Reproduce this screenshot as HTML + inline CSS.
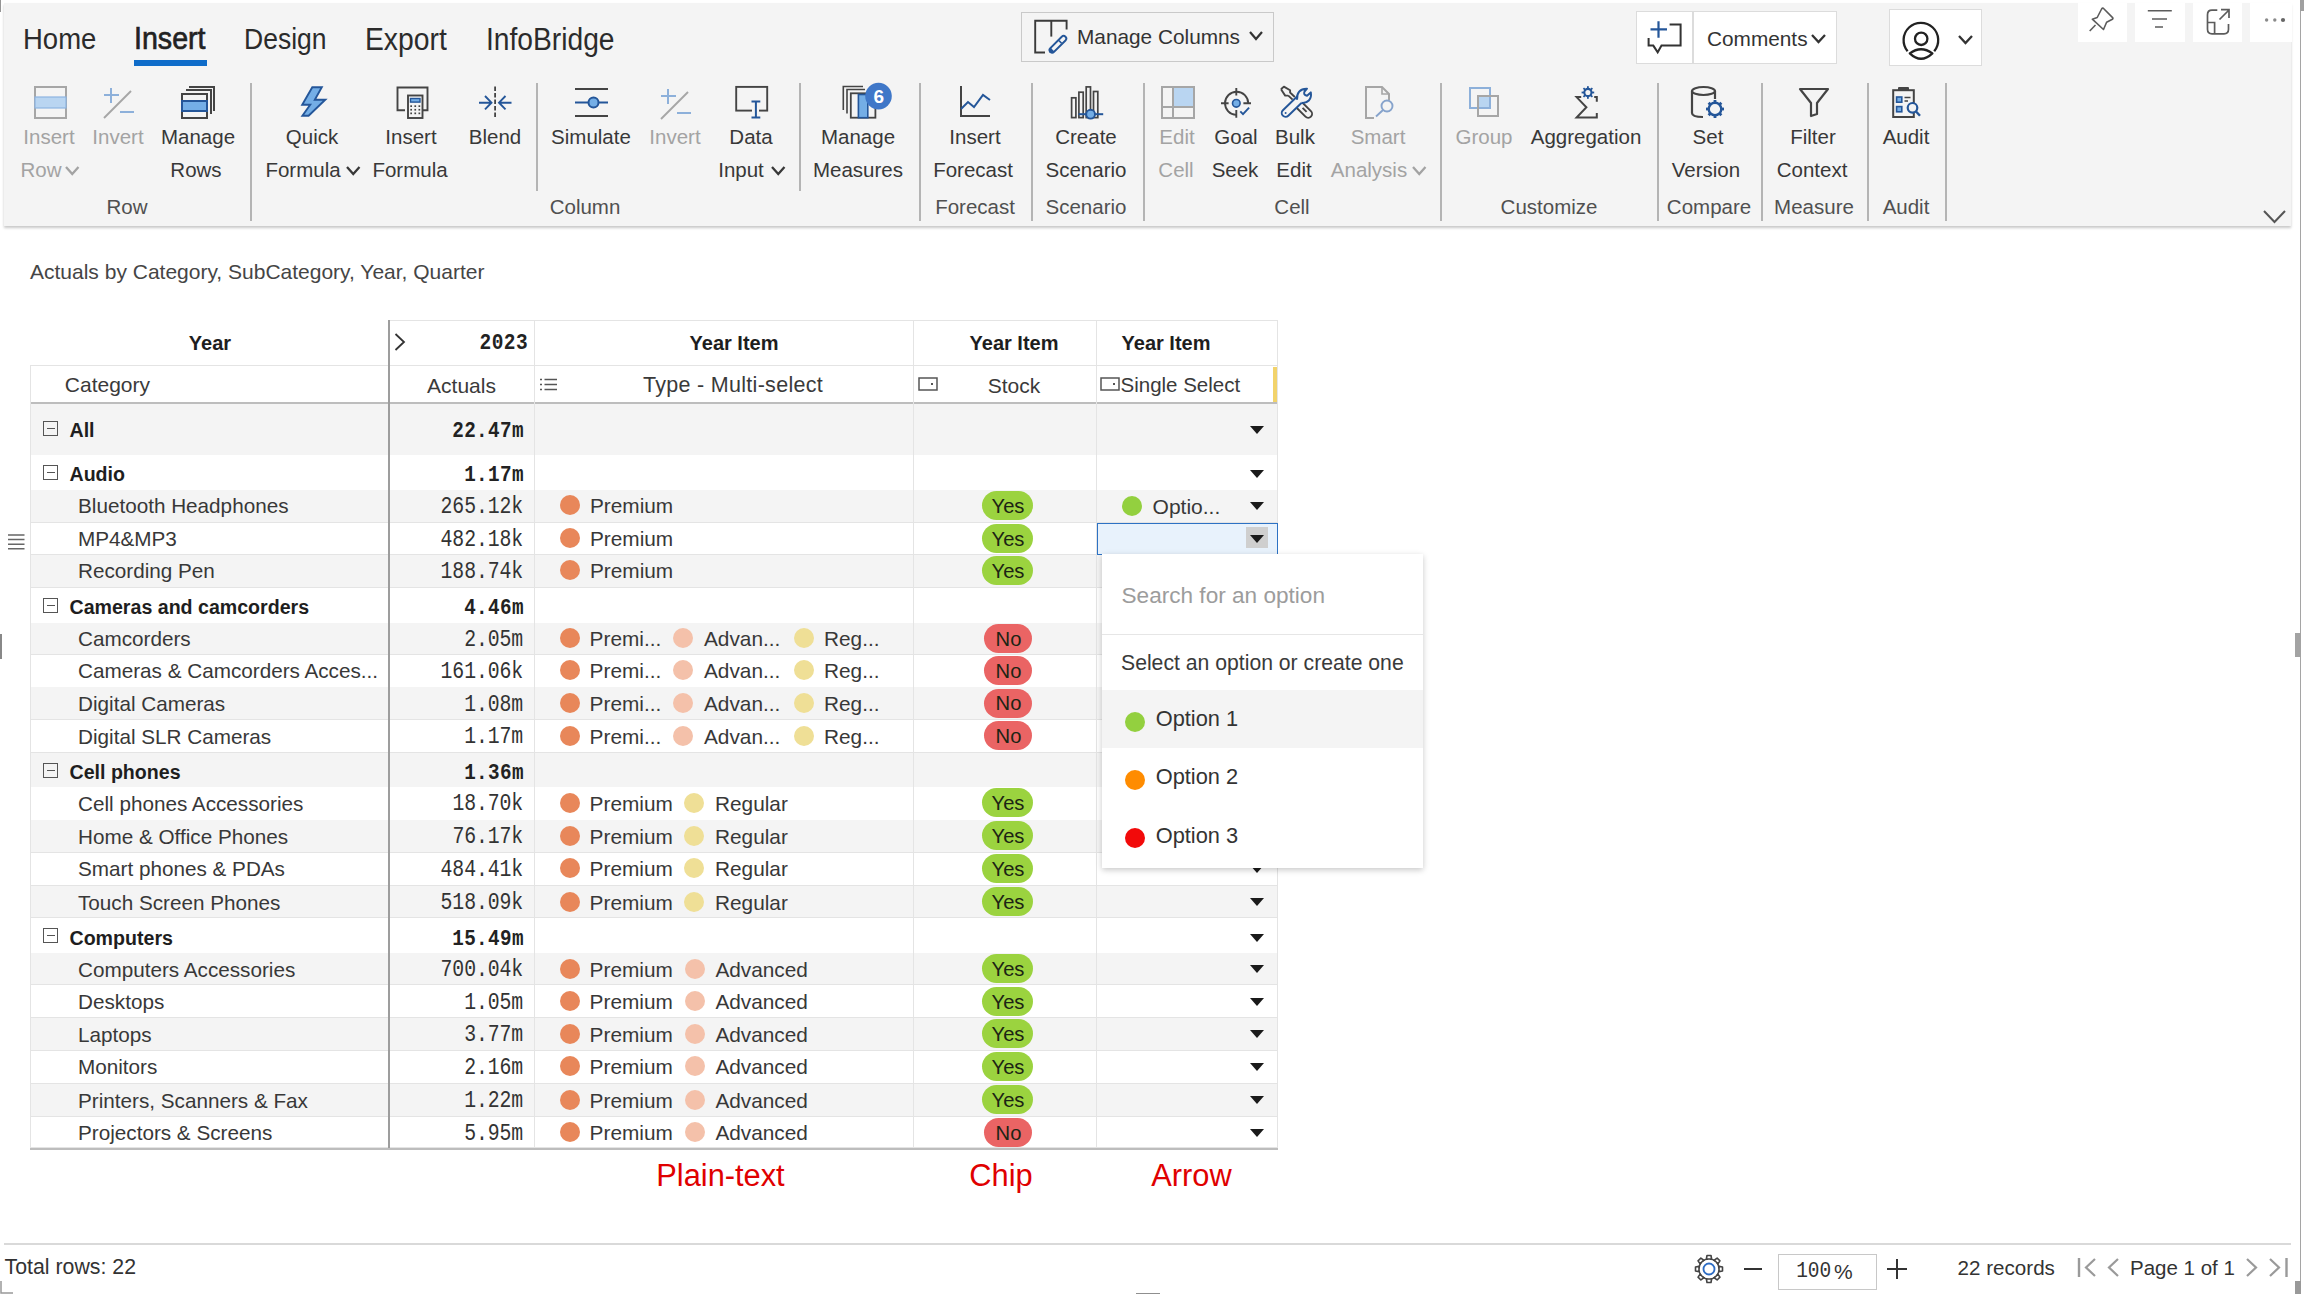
<!DOCTYPE html>
<html><head><meta charset="utf-8"><style>
html,body{margin:0;padding:0;}
body{width:2304px;height:1294px;position:relative;overflow:hidden;background:#fff;font-family:'Liberation Sans', sans-serif;}
.t{position:absolute;white-space:nowrap;}
svg{overflow:visible}
</style></head><body>
<div style="position:absolute;left:4px;top:3px;width:2287px;height:223px;background:#f4f4f4;box-shadow:0 1.5px 2.5px rgba(0,0,0,0.22);"></div>
<div style="position:absolute;left:0px;top:0px;width:1.3px;height:11.5px;background:#959595;"></div>
<div style="position:absolute;left:2299.5px;top:0px;width:1.5px;height:1294px;background:#a5a5a5;"></div>
<div style="position:absolute;left:2300px;top:0px;width:4px;height:11px;background:#a0a0a0;"></div>
<div style="position:absolute;left:2295px;top:633px;width:6px;height:24px;background:#a3a3a3;"></div>
<div class="t" style="left:23px;top:26.2px;font-size:27.5px;line-height:27.5px;color:#2b2b2b;font-weight:400;font-family:'Liberation Sans', sans-serif;transform:scaleY(1.1);transform-origin:0 23.29px;">Home</div>
<div class="t" style="left:134px;top:25.3px;font-size:28.6px;line-height:28.6px;color:#222;font-weight:400;font-family:'Liberation Sans', sans-serif;transform:scaleY(1.1);transform-origin:0 24.22px;-webkit-text-stroke:0.6px #222;">Insert</div>
<div class="t" style="left:244px;top:27.1px;font-size:26.5px;line-height:26.5px;color:#2b2b2b;font-weight:400;font-family:'Liberation Sans', sans-serif;transform:scaleY(1.1);transform-origin:0 22.45px;">Design</div>
<div class="t" style="left:365px;top:25.5px;font-size:28.3px;line-height:28.3px;color:#2b2b2b;font-weight:400;font-family:'Liberation Sans', sans-serif;transform:scaleY(1.1);transform-origin:0 23.97px;">Export</div>
<div class="t" style="left:486px;top:25.6px;font-size:28.2px;line-height:28.2px;color:#2b2b2b;font-weight:400;font-family:'Liberation Sans', sans-serif;transform:scaleY(1.1);transform-origin:0 23.89px;">InfoBridge</div>
<div style="position:absolute;left:134px;top:60px;width:73px;height:6px;background:#0f6cc9;"></div>
<div class="t" style="left:-351px;width:800px;text-align:center;top:126.9px;font-size:20.5px;line-height:20.5px;color:#a3a3a3;font-weight:400;font-family:'Liberation Sans', sans-serif;">Insert</div>
<div class="t" style="left:-282px;width:800px;text-align:center;top:126.9px;font-size:20.5px;line-height:20.5px;color:#a3a3a3;font-weight:400;font-family:'Liberation Sans', sans-serif;">Invert</div>
<div class="t" style="left:-202px;width:800px;text-align:center;top:126.9px;font-size:20.5px;line-height:20.5px;color:#383838;font-weight:400;font-family:'Liberation Sans', sans-serif;">Manage</div>
<div class="t" style="left:-88px;width:800px;text-align:center;top:126.9px;font-size:20.5px;line-height:20.5px;color:#383838;font-weight:400;font-family:'Liberation Sans', sans-serif;">Quick</div>
<div class="t" style="left:11px;width:800px;text-align:center;top:126.9px;font-size:20.5px;line-height:20.5px;color:#383838;font-weight:400;font-family:'Liberation Sans', sans-serif;">Insert</div>
<div class="t" style="left:95px;width:800px;text-align:center;top:126.9px;font-size:20.5px;line-height:20.5px;color:#383838;font-weight:400;font-family:'Liberation Sans', sans-serif;">Blend</div>
<div class="t" style="left:191px;width:800px;text-align:center;top:126.9px;font-size:20.5px;line-height:20.5px;color:#383838;font-weight:400;font-family:'Liberation Sans', sans-serif;">Simulate</div>
<div class="t" style="left:275px;width:800px;text-align:center;top:126.9px;font-size:20.5px;line-height:20.5px;color:#a3a3a3;font-weight:400;font-family:'Liberation Sans', sans-serif;">Invert</div>
<div class="t" style="left:351px;width:800px;text-align:center;top:126.9px;font-size:20.5px;line-height:20.5px;color:#383838;font-weight:400;font-family:'Liberation Sans', sans-serif;">Data</div>
<div class="t" style="left:458px;width:800px;text-align:center;top:126.9px;font-size:20.5px;line-height:20.5px;color:#383838;font-weight:400;font-family:'Liberation Sans', sans-serif;">Manage</div>
<div class="t" style="left:575px;width:800px;text-align:center;top:126.9px;font-size:20.5px;line-height:20.5px;color:#383838;font-weight:400;font-family:'Liberation Sans', sans-serif;">Insert</div>
<div class="t" style="left:686px;width:800px;text-align:center;top:126.9px;font-size:20.5px;line-height:20.5px;color:#383838;font-weight:400;font-family:'Liberation Sans', sans-serif;">Create</div>
<div class="t" style="left:777px;width:800px;text-align:center;top:126.9px;font-size:20.5px;line-height:20.5px;color:#a3a3a3;font-weight:400;font-family:'Liberation Sans', sans-serif;">Edit</div>
<div class="t" style="left:836px;width:800px;text-align:center;top:126.9px;font-size:20.5px;line-height:20.5px;color:#383838;font-weight:400;font-family:'Liberation Sans', sans-serif;">Goal</div>
<div class="t" style="left:895px;width:800px;text-align:center;top:126.9px;font-size:20.5px;line-height:20.5px;color:#383838;font-weight:400;font-family:'Liberation Sans', sans-serif;">Bulk</div>
<div class="t" style="left:978px;width:800px;text-align:center;top:126.9px;font-size:20.5px;line-height:20.5px;color:#a3a3a3;font-weight:400;font-family:'Liberation Sans', sans-serif;">Smart</div>
<div class="t" style="left:1084px;width:800px;text-align:center;top:126.9px;font-size:20.5px;line-height:20.5px;color:#a3a3a3;font-weight:400;font-family:'Liberation Sans', sans-serif;">Group</div>
<div class="t" style="left:1186px;width:800px;text-align:center;top:126.9px;font-size:20.5px;line-height:20.5px;color:#383838;font-weight:400;font-family:'Liberation Sans', sans-serif;">Aggregation</div>
<div class="t" style="left:1308px;width:800px;text-align:center;top:126.9px;font-size:20.5px;line-height:20.5px;color:#383838;font-weight:400;font-family:'Liberation Sans', sans-serif;">Set</div>
<div class="t" style="left:1413px;width:800px;text-align:center;top:126.9px;font-size:20.5px;line-height:20.5px;color:#383838;font-weight:400;font-family:'Liberation Sans', sans-serif;">Filter</div>
<div class="t" style="left:1506px;width:800px;text-align:center;top:126.9px;font-size:20.5px;line-height:20.5px;color:#383838;font-weight:400;font-family:'Liberation Sans', sans-serif;">Audit</div>
<div class="t" style="left:-359px;width:800px;text-align:center;top:159.8px;font-size:20.5px;line-height:20.5px;color:#a3a3a3;font-weight:400;font-family:'Liberation Sans', sans-serif;">Row</div>
<div class="t" style="left:-204px;width:800px;text-align:center;top:159.8px;font-size:20.5px;line-height:20.5px;color:#383838;font-weight:400;font-family:'Liberation Sans', sans-serif;">Rows</div>
<div class="t" style="left:-97px;width:800px;text-align:center;top:159.8px;font-size:20.5px;line-height:20.5px;color:#383838;font-weight:400;font-family:'Liberation Sans', sans-serif;">Formula</div>
<div class="t" style="left:10px;width:800px;text-align:center;top:159.8px;font-size:20.5px;line-height:20.5px;color:#383838;font-weight:400;font-family:'Liberation Sans', sans-serif;">Formula</div>
<div class="t" style="left:341px;width:800px;text-align:center;top:159.8px;font-size:20.5px;line-height:20.5px;color:#383838;font-weight:400;font-family:'Liberation Sans', sans-serif;">Input</div>
<div class="t" style="left:458px;width:800px;text-align:center;top:159.8px;font-size:20.5px;line-height:20.5px;color:#383838;font-weight:400;font-family:'Liberation Sans', sans-serif;">Measures</div>
<div class="t" style="left:573px;width:800px;text-align:center;top:159.8px;font-size:20.5px;line-height:20.5px;color:#383838;font-weight:400;font-family:'Liberation Sans', sans-serif;">Forecast</div>
<div class="t" style="left:686px;width:800px;text-align:center;top:159.8px;font-size:20.5px;line-height:20.5px;color:#383838;font-weight:400;font-family:'Liberation Sans', sans-serif;">Scenario</div>
<div class="t" style="left:776px;width:800px;text-align:center;top:159.8px;font-size:20.5px;line-height:20.5px;color:#a3a3a3;font-weight:400;font-family:'Liberation Sans', sans-serif;">Cell</div>
<div class="t" style="left:835px;width:800px;text-align:center;top:159.8px;font-size:20.5px;line-height:20.5px;color:#383838;font-weight:400;font-family:'Liberation Sans', sans-serif;">Seek</div>
<div class="t" style="left:894px;width:800px;text-align:center;top:159.8px;font-size:20.5px;line-height:20.5px;color:#383838;font-weight:400;font-family:'Liberation Sans', sans-serif;">Edit</div>
<div class="t" style="left:969px;width:800px;text-align:center;top:159.8px;font-size:20.5px;line-height:20.5px;color:#a3a3a3;font-weight:400;font-family:'Liberation Sans', sans-serif;">Analysis</div>
<div class="t" style="left:1306px;width:800px;text-align:center;top:159.8px;font-size:20.5px;line-height:20.5px;color:#383838;font-weight:400;font-family:'Liberation Sans', sans-serif;">Version</div>
<div class="t" style="left:1412px;width:800px;text-align:center;top:159.8px;font-size:20.5px;line-height:20.5px;color:#383838;font-weight:400;font-family:'Liberation Sans', sans-serif;">Context</div>
<svg style="position:absolute;left:65.25px;top:165.7px" width="14.5" height="9" viewBox="0 0 14.5 9"><polyline points="1,1 7.25,8 13.5,1" fill="none" stroke="#a3a3a3" stroke-width="2.3"/></svg>
<svg style="position:absolute;left:345.75px;top:165.7px" width="14.5" height="9" viewBox="0 0 14.5 9"><polyline points="1,1 7.25,8 13.5,1" fill="none" stroke="#383838" stroke-width="2.3"/></svg>
<svg style="position:absolute;left:770.75px;top:165.7px" width="14.5" height="9" viewBox="0 0 14.5 9"><polyline points="1,1 7.25,8 13.5,1" fill="none" stroke="#383838" stroke-width="2.3"/></svg>
<svg style="position:absolute;left:1411.75px;top:165.7px" width="14.5" height="9" viewBox="0 0 14.5 9"><polyline points="1,1 7.25,8 13.5,1" fill="none" stroke="#a3a3a3" stroke-width="2.3"/></svg>
<div class="t" style="left:-273px;width:800px;text-align:center;top:196.9px;font-size:20.5px;line-height:20.5px;color:#505050;font-weight:400;font-family:'Liberation Sans', sans-serif;">Row</div>
<div class="t" style="left:185px;width:800px;text-align:center;top:196.9px;font-size:20.5px;line-height:20.5px;color:#505050;font-weight:400;font-family:'Liberation Sans', sans-serif;">Column</div>
<div class="t" style="left:575px;width:800px;text-align:center;top:196.9px;font-size:20.5px;line-height:20.5px;color:#505050;font-weight:400;font-family:'Liberation Sans', sans-serif;">Forecast</div>
<div class="t" style="left:686px;width:800px;text-align:center;top:196.9px;font-size:20.5px;line-height:20.5px;color:#505050;font-weight:400;font-family:'Liberation Sans', sans-serif;">Scenario</div>
<div class="t" style="left:892px;width:800px;text-align:center;top:196.9px;font-size:20.5px;line-height:20.5px;color:#505050;font-weight:400;font-family:'Liberation Sans', sans-serif;">Cell</div>
<div class="t" style="left:1149px;width:800px;text-align:center;top:196.9px;font-size:20.5px;line-height:20.5px;color:#505050;font-weight:400;font-family:'Liberation Sans', sans-serif;">Customize</div>
<div class="t" style="left:1309px;width:800px;text-align:center;top:196.9px;font-size:20.5px;line-height:20.5px;color:#505050;font-weight:400;font-family:'Liberation Sans', sans-serif;">Compare</div>
<div class="t" style="left:1414px;width:800px;text-align:center;top:196.9px;font-size:20.5px;line-height:20.5px;color:#505050;font-weight:400;font-family:'Liberation Sans', sans-serif;">Measure</div>
<div class="t" style="left:1506px;width:800px;text-align:center;top:196.9px;font-size:20.5px;line-height:20.5px;color:#505050;font-weight:400;font-family:'Liberation Sans', sans-serif;">Audit</div>
<div style="position:absolute;left:250px;top:83px;width:2px;height:138px;background:#b4b4b4;"></div>
<div style="position:absolute;left:536px;top:83px;width:2px;height:108px;background:#b4b4b4;"></div>
<div style="position:absolute;left:799px;top:83px;width:2px;height:108px;background:#b4b4b4;"></div>
<div style="position:absolute;left:919px;top:83px;width:2px;height:138px;background:#b4b4b4;"></div>
<div style="position:absolute;left:1031px;top:83px;width:2px;height:138px;background:#b4b4b4;"></div>
<div style="position:absolute;left:1143px;top:83px;width:2px;height:138px;background:#b4b4b4;"></div>
<div style="position:absolute;left:1440px;top:83px;width:2px;height:138px;background:#b4b4b4;"></div>
<div style="position:absolute;left:1657px;top:83px;width:2px;height:138px;background:#b4b4b4;"></div>
<div style="position:absolute;left:1761px;top:83px;width:2px;height:138px;background:#b4b4b4;"></div>
<div style="position:absolute;left:1867px;top:83px;width:2px;height:138px;background:#b4b4b4;"></div>
<div style="position:absolute;left:1945px;top:83px;width:2px;height:138px;background:#b4b4b4;"></div>
<svg style="position:absolute;left:2263px;top:210px" width="23" height="13" viewBox="0 0 23 13"><polyline points="1,1 11.5,12 22,1" fill="none" stroke="#555" stroke-width="2"/></svg>
<div style="position:absolute;left:1021px;top:12px;width:253px;height:50px;border:1.5px solid #c9c9c9;box-sizing:border-box;background:#f4f4f4;"></div>
<div class="t" style="left:1077px;top:27.1px;font-size:20.8px;line-height:20.8px;color:#333;font-weight:400;font-family:'Liberation Sans', sans-serif;">Manage Columns</div>
<svg style="position:absolute;left:1248.5px;top:31.0px" width="14" height="9" viewBox="0 0 14 9"><polyline points="1,1 7.0,8 13,1" fill="none" stroke="#333" stroke-width="2.2"/></svg>
<svg style="position:absolute;left:1034px;top:19px" width="36" height="36" viewBox="0 0 36 36"><path d="M11,33.5 H1.2 V1.8 H32.6 V10.6" fill="none" stroke="#3a3a3a" stroke-width="1.9"/><path d="M17.3,1.8 V17.6" stroke="#3a3a3a" stroke-width="1.9"/><path d="M18.2,31 L29.6,19.6" stroke="#245699" stroke-width="7.2" stroke-linecap="round"/><path d="M18.8,30.4 L29.6,19.6" stroke="#f4f4f4" stroke-width="3.4" stroke-linecap="round"/><path d="M25,21.6 L27.6,24.2" stroke="#245699" stroke-width="1.6"/><path d="M15.2,33.8 L16.4,28.6 L20.6,32.8 Z" fill="#245699"/></svg>
<div style="position:absolute;left:1636px;top:11px;width:201px;height:53px;border:1.5px solid #dcdcdc;box-sizing:border-box;background:#fff;"></div>
<div style="position:absolute;left:1692px;top:11px;width:1.5px;height:53px;background:#dcdcdc;"></div>
<div class="t" style="left:1707px;top:29.3px;font-size:20.8px;line-height:20.8px;color:#333;font-weight:400;font-family:'Liberation Sans', sans-serif;">Comments</div>
<svg style="position:absolute;left:1810.5px;top:34.0px" width="15" height="9" viewBox="0 0 15 9"><polyline points="1,1 7.5,8 14,1" fill="none" stroke="#333" stroke-width="2.3"/></svg>
<svg style="position:absolute;left:1646px;top:20px" width="37" height="35" viewBox="0 0 37 35"><path d="M23.6,4.6 H34.6 V25.6 H15.5 L11.7,32.3 L7.3,25.6 H2.6 V18" fill="none" stroke="#333" stroke-width="2"/><path d="M12.5,1.3 V17.7 M4.5,9.4 H21" stroke="#245699" stroke-width="2.2"/></svg>
<div style="position:absolute;left:1889px;top:9px;width:93px;height:57px;border:1.5px solid #dcdcdc;box-sizing:border-box;background:#fff;"></div>
<svg style="position:absolute;left:1900px;top:20px" width="42" height="42" viewBox="0 0 42 42"><path d="M7.6,31.2 A17.3,17.3 0 1 1 34.2,31.2" fill="none" stroke="#222" stroke-width="2.3"/><circle cx="21.2" cy="18.8" r="6.2" fill="none" stroke="#222" stroke-width="2.3"/><path d="M9.8,33.4 Q21,25.2 32.4,33.4 Q21,44.2 9.8,33.4 Z" fill="none" stroke="#222" stroke-width="2.3" stroke-linejoin="round"/></svg>
<svg style="position:absolute;left:1957.5px;top:35.0px" width="15" height="9" viewBox="0 0 15 9"><polyline points="1,1 7.5,8 14,1" fill="none" stroke="#333" stroke-width="2.3"/></svg>
<div style="position:absolute;left:2078px;top:3px;width:49px;height:39px;background:#fff;"></div>
<div style="position:absolute;left:2135px;top:3px;width:50px;height:39px;background:#fff;"></div>
<div style="position:absolute;left:2193px;top:3px;width:49px;height:39px;background:#fff;"></div>
<div style="position:absolute;left:2250px;top:3px;width:42px;height:39px;background:#fff;"></div>
<svg style="position:absolute;left:2089px;top:7px" width="26" height="26" viewBox="0 0 26 26"><path d="M14.3,1.3 L23.6,10.6 Q24.4,11.5 23.4,12.3 L17.6,15.3 L14.5,22.5 L3.3,12.2 L8.2,10.5 L12.6,2 Q13.4,0.8 14.3,1.3 Z" fill="none" stroke="#5c5c5c" stroke-width="1.6" stroke-linejoin="round"/><path d="M6.5,18 L0.7,24" stroke="#5c5c5c" stroke-width="1.6"/></svg>
<svg style="position:absolute;left:2147px;top:9px" width="26" height="22" viewBox="0 0 26 22"><path d="M0.8,1.8 H24.8 M5,10 H20 M8,18 H16" stroke="#5c5c5c" stroke-width="1.6"/></svg>
<svg style="position:absolute;left:2204px;top:8px" width="26" height="27" viewBox="0 0 26 27"><path d="M13.3,2.2 H8 Q3.5,2.2 3.5,6.7 V21.3 Q3.5,25.8 8,25.8 H20 Q24.5,25.8 24.5,21.3 V16" fill="none" stroke="#5c5c5c" stroke-width="1.7"/><path d="M3.5,14.5 H10.6 V25.8" fill="none" stroke="#5c5c5c" stroke-width="1.7"/><path d="M15.5,11.5 L25,2 M17,1.7 H25 V10" fill="none" stroke="#5c5c5c" stroke-width="1.7"/></svg>
<svg style="position:absolute;left:2263px;top:16px" width="28" height="8" viewBox="0 0 28 8"><circle cx="3.6" cy="4" r="1.7" fill="#8a8a8a"/><circle cx="11.8" cy="4" r="1.7" fill="#8a8a8a"/><circle cx="20" cy="4" r="2.1" fill="#666"/></svg>
<svg style="position:absolute;left:34px;top:86px" width="33" height="33" viewBox="0 0 33 33"><rect x="1" y="1" width="31" height="31" fill="none" stroke="#a6a6a6" stroke-width="2"/><rect x="1" y="11" width="31" height="11" fill="#b9d5f1" stroke="#8db4e2" stroke-width="1.2"/></svg>
<svg style="position:absolute;left:103px;top:87px" width="32" height="32" viewBox="0 0 32 32"><path d="M8,1 V16 M1,8 H16" stroke="#8db0da" stroke-width="2"/><path d="M17,25 H31" stroke="#8db0da" stroke-width="2"/><path d="M1,31 L28,4" stroke="#a6a6a6" stroke-width="2"/></svg>
<svg style="position:absolute;left:181px;top:86px" width="34" height="33" viewBox="0 0 34 33"><path d="M8,1 H33 V25" fill="none" stroke="#444444" stroke-width="2"/><path d="M5,4 H30 V28" fill="none" stroke="#444444" stroke-width="2"/><rect x="1" y="8" width="25" height="24" fill="#f4f4f4" stroke="#444444" stroke-width="2"/><rect x="1" y="15" width="25" height="10" fill="#74aee6" stroke="#245699" stroke-width="2"/></svg>
<svg style="position:absolute;left:300px;top:86px" width="28" height="31" viewBox="0 0 28 31"><path d="M12.3,1.2 H21.8 L14.8,13.8 H25.3 L8.6,29.8 H2.4 L10.2,18.8 H2.2 Z" fill="#74aee6" stroke="#245699" stroke-width="1.9" stroke-linejoin="miter"/></svg>
<svg style="position:absolute;left:395px;top:86px" width="35" height="34" viewBox="0 0 35 34"><path d="M10,24.2 H2.5 V1.5 H32.5 V24.2 H28" fill="none" stroke="#444444" stroke-width="1.9"/><rect x="13" y="9.5" width="14.5" height="22.5" fill="#f4f4f4" stroke="#444444" stroke-width="1.9"/><rect x="15.5" y="12.5" width="9.5" height="3.6" fill="#74aee6" stroke="#245699" stroke-width="1.4"/><rect x="15.3" y="19.3" width="1.7" height="1.7" fill="#444444"/><rect x="15.3" y="22.9" width="1.7" height="1.7" fill="#444444"/><rect x="15.3" y="26.5" width="1.7" height="1.7" fill="#444444"/><rect x="19.4" y="19.3" width="1.7" height="1.7" fill="#444444"/><rect x="19.4" y="22.9" width="1.7" height="1.7" fill="#444444"/><rect x="19.4" y="26.5" width="1.7" height="1.7" fill="#444444"/><rect x="23.5" y="19.3" width="1.7" height="1.7" fill="#444444"/><rect x="23.5" y="22.9" width="1.7" height="1.7" fill="#444444"/><rect x="23.5" y="26.5" width="1.7" height="1.7" fill="#444444"/></svg>
<svg style="position:absolute;left:477px;top:86px" width="36" height="34" viewBox="0 0 36 34"><path d="M18.1,0.5 V33" stroke="#444444" stroke-width="1.8" stroke-dasharray="4.5,2"/><path d="M2,16.7 H14 M8,10 L14.5,16.7 L8,23.4" fill="none" stroke="#245699" stroke-width="1.9"/><path d="M34.5,16.7 H22.3 M28.5,10 L22,16.7 L28.5,23.4" fill="none" stroke="#245699" stroke-width="1.9"/></svg>
<svg style="position:absolute;left:574px;top:87px" width="36" height="31" viewBox="0 0 36 31"><path d="M1,2 H34 M1,29 H34" stroke="#444444" stroke-width="2"/><path d="M1,15.5 H34" stroke="#245699" stroke-width="2"/><circle cx="19.5" cy="15.5" r="5" fill="#74aee6" stroke="#245699" stroke-width="2"/></svg>
<svg style="position:absolute;left:660px;top:88px" width="32" height="32" viewBox="0 0 32 32"><path d="M8,1 V16 M1,8 H16" stroke="#8db0da" stroke-width="2"/><path d="M17,25 H31" stroke="#8db0da" stroke-width="2"/><path d="M1,31 L28,4" stroke="#a6a6a6" stroke-width="2"/></svg>
<svg style="position:absolute;left:735px;top:86px" width="34" height="34" viewBox="0 0 34 34"><rect x="1.2" y="0.9" width="31" height="23.7" fill="none" stroke="#444444" stroke-width="1.9"/><rect x="17" y="21" width="7" height="6" fill="#f4f4f4"/><path d="M16.5,15.5 H25.3 M20.9,15.5 V31.5 M16.5,31.5 H25.3" stroke="#245699" stroke-width="2"/></svg>
<svg style="position:absolute;left:842px;top:85px" width="50" height="35" viewBox="0 0 50 35"><path d="M1.3,25 V1.5 H21" fill="none" stroke="#444444" stroke-width="1.6"/><path d="M5,28.5 V4.5 H23" fill="none" stroke="#444444" stroke-width="1.6"/><rect x="8.8" y="8.3" width="24.6" height="24.4" fill="#f4f4f4" stroke="#444444" stroke-width="1.8"/><rect x="16.4" y="9.5" width="9.4" height="23.2" fill="#74aee6" stroke="#245699" stroke-width="1.6"/><circle cx="36.5" cy="11.1" r="13.3" fill="#3f77c8"/><text x="36.7" y="18.2" font-family="Liberation Sans" font-weight="700" font-size="19" fill="#fff" text-anchor="middle">6</text></svg>
<svg style="position:absolute;left:959px;top:86px" width="33" height="32" viewBox="0 0 33 32"><path d="M2,0 V30 H31" fill="none" stroke="#444444" stroke-width="2"/><polyline points="2,23 9,16 15,21 24,9 31,14" fill="none" stroke="#245699" stroke-width="2"/></svg>
<svg style="position:absolute;left:1070px;top:86px" width="35" height="33" viewBox="0 0 35 33"><rect x="1.6" y="11.8" width="4.3" height="19.8" fill="none" stroke="#444444" stroke-width="1.7"/><rect x="8.9" y="6.2" width="4.3" height="25.4" fill="none" stroke="#444444" stroke-width="1.7"/><rect x="16.2" y="0.9" width="4.3" height="30.7" fill="none" stroke="#444444" stroke-width="1.7"/><rect x="23.5" y="5.5" width="4.3" height="26.1" fill="none" stroke="#444444" stroke-width="1.7"/><path d="M8.5,28.2 H33.2" stroke="#245699" stroke-width="2"/><circle cx="20.6" cy="28.2" r="4.4" fill="#74aee6" stroke="#245699" stroke-width="1.9"/></svg>
<svg style="position:absolute;left:1161px;top:86px" width="34" height="33" viewBox="0 0 34 33"><rect x="12" y="1" width="21" height="20" fill="#b9d5f1"/><rect x="1" y="1" width="32" height="31" fill="none" stroke="#a6a6a6" stroke-width="2"/><path d="M12,1 V32 M1,21 H33" stroke="#a6a6a6" stroke-width="2"/></svg>
<svg style="position:absolute;left:1220px;top:86px" width="33" height="33" viewBox="0 0 33 33"><path d="M28.2,17.3 A11.6,11.6 0 1 0 16.3,28.9" fill="none" stroke="#444444" stroke-width="1.9"/><path d="M16.3,1.9 V9.6 M16.3,24.1 V31.8 M1,17.3 H8.6 M23.4,17.3 H31" stroke="#444444" stroke-width="1.9"/><circle cx="16.3" cy="17.3" r="3.8" fill="#74aee6" stroke="#245699" stroke-width="1.6"/><path d="M20.3,25.4 L23,28.1 L29.1,21.6" fill="none" stroke="#245699" stroke-width="1.9"/></svg>
<svg style="position:absolute;left:1278px;top:86px" width="36" height="34" viewBox="0 0 36 34"><path d="M3,3.3 L5.9,0.6 L12.1,4.3 L12.1,6.5 L16.8,11 M10.3,9.6 L7.2,9.6 L3,3.3 M10.3,9.6 L14.6,13.6" fill="none" stroke="#444444" stroke-width="1.9" stroke-linejoin="round"/><path d="M19.8,17.5 L30.2,27.9" stroke="#444444" stroke-width="9.6" stroke-linecap="round"/><path d="M19.8,17.5 L30.2,27.9" stroke="#f4f4f4" stroke-width="5.8" stroke-linecap="round"/><path d="M24.6,21.8 L28.6,25.9" stroke="#444444" stroke-width="1.9"/><path d="M7.6,27 L21.5,13.5" stroke="#245699" stroke-width="9.6" stroke-linecap="round"/><path d="M7.6,27 L21.5,13.5" stroke="#f4f4f4" stroke-width="5.8" stroke-linecap="round"/><path d="M19,13.8 C18.5,7 22,2.5 29,2.7 L26.5,5.6 Q25,9 29,9.8 L32.8,6.4 C34,13.5 29.5,17.5 23.5,16.8" fill="#f4f4f4" stroke="#245699" stroke-width="2" stroke-linejoin="round"/><circle cx="7.6" cy="27" r="1" fill="#245699"/></svg>
<svg style="position:absolute;left:1364px;top:86px" width="30" height="34" viewBox="0 0 30 34"><path d="M10,32 H2 V1 H18 L25,8 V14" fill="none" stroke="#a6a6a6" stroke-width="2"/><path d="M18,1 V8 H25" fill="none" stroke="#a6a6a6" stroke-width="1.6"/><circle cx="23" cy="20" r="5.5" fill="none" stroke="#86a3cc" stroke-width="1.9"/><path d="M19,24 L12,30.5" stroke="#86a3cc" stroke-width="1.9"/></svg>
<svg style="position:absolute;left:1469px;top:87px" width="31" height="31" viewBox="0 0 31 31"><rect x="9" y="9" width="12" height="12" fill="#b9d5f1"/><rect x="1" y="1" width="20" height="20" fill="none" stroke="#8db0da" stroke-width="2"/><rect x="9" y="9" width="20" height="20" fill="none" stroke="#a6a6a6" stroke-width="2"/></svg>
<svg style="position:absolute;left:1574px;top:86px" width="26" height="33" viewBox="0 0 26 33"><path d="M7.2,11.1 H2.6 L12.4,21.3 L2.6,31.6 H22.8 V27" fill="none" stroke="#444444" stroke-width="2"/><path d="M20.2,11.1 H22.8 V15.8" fill="none" stroke="#444444" stroke-width="2"/><circle cx="13.9" cy="6.5" r="3.6" fill="none" stroke="#245699" stroke-width="2.1"/><rect x="13" y="0.2" width="1.8" height="2.6" fill="#245699" transform="rotate(0 13.9 6.5)"/><rect x="13" y="0.2" width="1.8" height="2.6" fill="#245699" transform="rotate(45 13.9 6.5)"/><rect x="13" y="0.2" width="1.8" height="2.6" fill="#245699" transform="rotate(90 13.9 6.5)"/><rect x="13" y="0.2" width="1.8" height="2.6" fill="#245699" transform="rotate(135 13.9 6.5)"/><rect x="13" y="0.2" width="1.8" height="2.6" fill="#245699" transform="rotate(180 13.9 6.5)"/><rect x="13" y="0.2" width="1.8" height="2.6" fill="#245699" transform="rotate(225 13.9 6.5)"/><rect x="13" y="0.2" width="1.8" height="2.6" fill="#245699" transform="rotate(270 13.9 6.5)"/><rect x="13" y="0.2" width="1.8" height="2.6" fill="#245699" transform="rotate(315 13.9 6.5)"/></svg>
<svg style="position:absolute;left:1690px;top:86px" width="36" height="34" viewBox="0 0 36 34"><path d="M2,5 V27 Q2,31 13,31" fill="none" stroke="#444444" stroke-width="2.2"/><ellipse cx="13.5" cy="5" rx="11.5" ry="4" fill="none" stroke="#444444" stroke-width="2.2"/><path d="M25,5 V13" stroke="#444444" stroke-width="2.2"/><circle cx="25" cy="23" r="6.3" fill="#f4f4f4" stroke="#245699" stroke-width="2.4"/><rect x="23.6" y="14" width="2.8" height="3.2" fill="#245699" transform="rotate(0 25 23)"/><rect x="23.6" y="14" width="2.8" height="3.2" fill="#245699" transform="rotate(45 25 23)"/><rect x="23.6" y="14" width="2.8" height="3.2" fill="#245699" transform="rotate(90 25 23)"/><rect x="23.6" y="14" width="2.8" height="3.2" fill="#245699" transform="rotate(135 25 23)"/><rect x="23.6" y="14" width="2.8" height="3.2" fill="#245699" transform="rotate(180 25 23)"/><rect x="23.6" y="14" width="2.8" height="3.2" fill="#245699" transform="rotate(225 25 23)"/><rect x="23.6" y="14" width="2.8" height="3.2" fill="#245699" transform="rotate(270 25 23)"/><rect x="23.6" y="14" width="2.8" height="3.2" fill="#245699" transform="rotate(315 25 23)"/></svg>
<svg style="position:absolute;left:1798px;top:87px" width="32" height="31" viewBox="0 0 32 31"><path d="M2,2 H30 L19,16 V27 L13,29 V16 Z" fill="none" stroke="#444444" stroke-width="2.2" stroke-linejoin="round"/></svg>
<svg style="position:absolute;left:1891px;top:87px" width="30" height="32" viewBox="0 0 30 32"><rect x="2.2" y="3.2" width="20.6" height="26.8" fill="none" stroke="#444444" stroke-width="2"/><rect x="7" y="0" width="11" height="4" rx="1" fill="#444444"/><rect x="5.6" y="10" width="5.2" height="5.2" fill="#74aee6" stroke="#245699" stroke-width="1.6"/><rect x="5.6" y="19.6" width="5.2" height="5.2" fill="#74aee6" stroke="#245699" stroke-width="1.6"/><path d="M13.5,10.5 H19.5 M13.5,14 H17" stroke="#444444" stroke-width="1.6"/><circle cx="21.5" cy="20.8" r="4.8" fill="#f4f4f4" stroke="#245699" stroke-width="2.2"/><path d="M25,24.5 L29,28.8" stroke="#245699" stroke-width="2.4"/></svg>
<div class="t" style="left:30px;top:261.0px;font-size:21px;line-height:21px;color:#454545;font-weight:400;font-family:'Liberation Sans', sans-serif;">Actuals by Category, SubCategory, Year, Quarter</div>
<div style="position:absolute;left:30px;top:404px;width:1247px;height:51px;background:#f4f4f4;"></div>
<div style="position:absolute;left:30px;top:490px;width:1247px;height:33px;background:#f4f4f4;"></div>
<div style="position:absolute;left:30px;top:522px;width:1247px;height:1px;background:#e4e4e4;"></div>
<div style="position:absolute;left:30px;top:554px;width:1247px;height:1px;background:#e4e4e4;"></div>
<div style="position:absolute;left:30px;top:555px;width:1247px;height:33px;background:#f4f4f4;"></div>
<div style="position:absolute;left:30px;top:587px;width:1247px;height:1px;background:#e4e4e4;"></div>
<div style="position:absolute;left:30px;top:623px;width:1247px;height:32px;background:#f4f4f4;"></div>
<div style="position:absolute;left:30px;top:654px;width:1247px;height:1px;background:#e4e4e4;"></div>
<div style="position:absolute;left:30px;top:687px;width:1247px;height:1px;background:#e4e4e4;"></div>
<div style="position:absolute;left:30px;top:687px;width:1247px;height:33px;background:#f4f4f4;"></div>
<div style="position:absolute;left:30px;top:719px;width:1247px;height:1px;background:#e4e4e4;"></div>
<div style="position:absolute;left:30px;top:752px;width:1247px;height:1px;background:#e4e4e4;"></div>
<div style="position:absolute;left:30px;top:753px;width:1247px;height:34px;background:#f4f4f4;"></div>
<div style="position:absolute;left:30px;top:820px;width:1247px;height:1px;background:#e4e4e4;"></div>
<div style="position:absolute;left:30px;top:820px;width:1247px;height:33px;background:#f4f4f4;"></div>
<div style="position:absolute;left:30px;top:852px;width:1247px;height:1px;background:#e4e4e4;"></div>
<div style="position:absolute;left:30px;top:885px;width:1247px;height:1px;background:#e4e4e4;"></div>
<div style="position:absolute;left:30px;top:886px;width:1247px;height:32px;background:#f4f4f4;"></div>
<div style="position:absolute;left:30px;top:917px;width:1247px;height:1px;background:#e4e4e4;"></div>
<div style="position:absolute;left:30px;top:953px;width:1247px;height:32px;background:#f4f4f4;"></div>
<div style="position:absolute;left:30px;top:984px;width:1247px;height:1px;background:#e4e4e4;"></div>
<div style="position:absolute;left:30px;top:1017px;width:1247px;height:1px;background:#e4e4e4;"></div>
<div style="position:absolute;left:30px;top:1018px;width:1247px;height:33px;background:#f4f4f4;"></div>
<div style="position:absolute;left:30px;top:1050px;width:1247px;height:1px;background:#e4e4e4;"></div>
<div style="position:absolute;left:30px;top:1083px;width:1247px;height:1px;background:#e4e4e4;"></div>
<div style="position:absolute;left:30px;top:1084px;width:1247px;height:33px;background:#f4f4f4;"></div>
<div style="position:absolute;left:30px;top:1116px;width:1247px;height:1px;background:#e4e4e4;"></div>
<div style="position:absolute;left:30px;top:1147px;width:1247px;height:1px;background:#e4e4e4;"></div>
<div style="position:absolute;left:388px;top:320px;width:889px;height:1px;background:#e4e4e4;"></div>
<div style="position:absolute;left:30px;top:365px;width:1247px;height:1px;background:#e4e4e4;"></div>
<div style="position:absolute;left:30px;top:402px;width:1248px;height:2px;background:#bdbdbd;"></div>
<div style="position:absolute;left:30px;top:1148px;width:1248px;height:2px;background:#bdbdbd;"></div>
<div style="position:absolute;left:30px;top:365px;width:1px;height:783px;background:#e4e4e4;"></div>
<div style="position:absolute;left:534px;top:320px;width:1px;height:828px;background:#e4e4e4;"></div>
<div style="position:absolute;left:913px;top:320px;width:1px;height:828px;background:#e4e4e4;"></div>
<div style="position:absolute;left:1096px;top:320px;width:1px;height:828px;background:#e4e4e4;"></div>
<div style="position:absolute;left:1277px;top:320px;width:1px;height:828px;background:#e4e4e4;"></div>
<div style="position:absolute;left:388px;top:320px;width:2px;height:828px;background:#9d9d9d;"></div>
<div style="position:absolute;left:1273px;top:367px;width:4px;height:35px;background:#f2d36b;"></div>
<div class="t" style="left:-190px;width:800px;text-align:center;top:333.1px;font-size:20px;line-height:20px;color:#1e1e1e;font-weight:700;font-family:'Liberation Sans', sans-serif;">Year</div>
<div class="t" style="left:228px;width:300px;text-align:right;top:335.2px;font-size:19.5px;line-height:19.5px;color:#222;font-weight:700;font-family:'Liberation Mono', monospace;transform:scaleY(1.12);transform-origin:0 15.0px;letter-spacing:0.4px">2023</div>
<svg style="position:absolute;left:394px;top:333px" width="12" height="18" viewBox="0 0 12 18"><polyline points="1.5,1 10,9 1.5,17" fill="none" stroke="#333" stroke-width="1.8"/></svg>
<div class="t" style="left:334px;width:800px;text-align:center;top:333.1px;font-size:20px;line-height:20px;color:#1e1e1e;font-weight:700;font-family:'Liberation Sans', sans-serif;">Year Item</div>
<div class="t" style="left:614px;width:800px;text-align:center;top:333.1px;font-size:20px;line-height:20px;color:#1e1e1e;font-weight:700;font-family:'Liberation Sans', sans-serif;">Year Item</div>
<div class="t" style="left:766px;width:800px;text-align:center;top:333.1px;font-size:20px;line-height:20px;color:#1e1e1e;font-weight:700;font-family:'Liberation Sans', sans-serif;">Year Item</div>
<div class="t" style="left:64.8px;top:373.7px;font-size:21px;line-height:21px;color:#3a3a3a;font-weight:400;font-family:'Liberation Sans', sans-serif;">Category</div>
<div class="t" style="left:61.5px;width:800px;text-align:center;top:374.9px;font-size:21px;line-height:21px;color:#3a3a3a;font-weight:400;font-family:'Liberation Sans', sans-serif;">Actuals</div>
<div class="t" style="left:333px;width:800px;text-align:center;top:374.5px;font-size:21.5px;line-height:21.5px;color:#3a3a3a;font-weight:400;font-family:'Liberation Sans', sans-serif;letter-spacing:0.3px">Type - Multi-select</div>
<div class="t" style="left:614px;width:800px;text-align:center;top:374.9px;font-size:21px;line-height:21px;color:#3a3a3a;font-weight:400;font-family:'Liberation Sans', sans-serif;">Stock</div>
<div class="t" style="left:1120.5px;top:375.3px;font-size:20.5px;line-height:20.5px;color:#3a3a3a;font-weight:400;font-family:'Liberation Sans', sans-serif;">Single Select</div>
<svg style="position:absolute;left:540px;top:378px" width="18" height="13" viewBox="0 0 18 13"><path d="M0,1.5 H2 M0,6.5 H2 M0,11.5 H2" stroke="#555" stroke-width="1.6"/><path d="M4.5,1.5 H17 M4.5,6.5 H17 M4.5,11.5 H17" stroke="#555" stroke-width="1.6"/></svg>
<svg style="position:absolute;left:918px;top:377px" width="20" height="14" viewBox="0 0 20 14"><rect x="1" y="1" width="18" height="12" fill="none" stroke="#555" stroke-width="1.5"/><rect x="13" y="6" width="2" height="2" fill="#555"/></svg>
<svg style="position:absolute;left:1100px;top:377px" width="20" height="14" viewBox="0 0 20 14"><rect x="1" y="1" width="18" height="12" fill="none" stroke="#555" stroke-width="1.5"/><rect x="13" y="6" width="2" height="2" fill="#555"/></svg>
<div style="position:absolute;left:43px;top:421px;width:15px;height:15px;border:1.4px solid #555;box-sizing:border-box;"></div>
<div style="position:absolute;left:46.5px;top:427.5px;width:8px;height:1.6px;background:#555;"></div>
<div class="t" style="left:69.5px;top:421.4px;font-size:19.6px;line-height:19.6px;color:#1e1e1e;font-weight:700;font-family:'Liberation Sans', sans-serif;">All</div>
<div class="t" style="left:224px;width:300px;text-align:right;top:423.4px;font-size:19.3px;line-height:19.3px;color:#222;font-weight:700;font-family:'Liberation Mono', monospace;transform:scaleY(1.12);transform-origin:0 14.8px;letter-spacing:0.4px">22.47m</div>
<svg style="position:absolute;left:1250px;top:426px" width="14" height="8" viewBox="0 0 14 8"><polygon points="0,0 14,0 7,8" fill="#1a1a1a"/></svg>
<div style="position:absolute;left:43px;top:465px;width:15px;height:15px;border:1.4px solid #555;box-sizing:border-box;"></div>
<div style="position:absolute;left:46.5px;top:471.5px;width:8px;height:1.6px;background:#555;"></div>
<div class="t" style="left:69.5px;top:465.4px;font-size:19.6px;line-height:19.6px;color:#1e1e1e;font-weight:700;font-family:'Liberation Sans', sans-serif;">Audio</div>
<div class="t" style="left:224px;width:300px;text-align:right;top:467.4px;font-size:19.3px;line-height:19.3px;color:#222;font-weight:700;font-family:'Liberation Mono', monospace;transform:scaleY(1.12);transform-origin:0 14.8px;letter-spacing:0.4px">1.17m</div>
<svg style="position:absolute;left:1250px;top:470px" width="14" height="8" viewBox="0 0 14 8"><polygon points="0,0 14,0 7,8" fill="#1a1a1a"/></svg>
<div class="t" style="left:78px;top:496.4px;font-size:20.7px;line-height:20.7px;color:#383838;font-weight:400;font-family:'Liberation Sans', sans-serif;">Bluetooth Headphones</div>
<div class="t" style="left:223px;width:300px;text-align:right;top:498.9px;font-size:19.8px;line-height:19.8px;color:#333;font-weight:400;font-family:'Liberation Mono', monospace;transform:scaleY(1.18);transform-origin:0 15.2px;letter-spacing:-0.1px">265.12k</div>
<div style="position:absolute;left:560px;top:495.4px;width:20px;height:20px;border-radius:50%;background:#e8875a"></div>
<div class="t" style="left:590px;top:496.3px;font-size:20.8px;line-height:20.8px;color:#383838;font-weight:400;font-family:'Liberation Sans', sans-serif;">Premium</div>
<div style="position:absolute;left:982px;top:490.9px;width:51px;height:29px;border-radius:15px;background:#9bd33f"></div>
<div class="t" style="left:608.0px;width:800px;text-align:center;top:495.8px;font-size:20.2px;line-height:20.2px;color:#1c2414;font-weight:400;font-family:'Liberation Sans', sans-serif;">Yes</div>
<svg style="position:absolute;left:1250px;top:501.9px" width="14" height="8" viewBox="0 0 14 8"><polygon points="0,0 14,0 7,8" fill="#1a1a1a"/></svg>
<div style="position:absolute;left:1121.7px;top:495.7px;width:20px;height:20px;border-radius:50%;background:#93d03f"></div>
<div class="t" style="left:1152.6px;top:496.1px;font-size:21px;line-height:21px;color:#383838;font-weight:400;font-family:'Liberation Sans', sans-serif;">Optio...</div>
<div class="t" style="left:78px;top:529.1px;font-size:20.7px;line-height:20.7px;color:#383838;font-weight:400;font-family:'Liberation Sans', sans-serif;">MP4&amp;MP3</div>
<div class="t" style="left:223px;width:300px;text-align:right;top:531.6px;font-size:19.8px;line-height:19.8px;color:#333;font-weight:400;font-family:'Liberation Mono', monospace;transform:scaleY(1.18);transform-origin:0 15.2px;letter-spacing:-0.1px">482.18k</div>
<div style="position:absolute;left:560px;top:528.1px;width:20px;height:20px;border-radius:50%;background:#e8875a"></div>
<div class="t" style="left:590px;top:529.0px;font-size:20.8px;line-height:20.8px;color:#383838;font-weight:400;font-family:'Liberation Sans', sans-serif;">Premium</div>
<div style="position:absolute;left:982px;top:523.6px;width:51px;height:29px;border-radius:15px;background:#9bd33f"></div>
<div class="t" style="left:608.0px;width:800px;text-align:center;top:528.5px;font-size:20.2px;line-height:20.2px;color:#1c2414;font-weight:400;font-family:'Liberation Sans', sans-serif;">Yes</div>
<div class="t" style="left:78px;top:561.4px;font-size:20.7px;line-height:20.7px;color:#383838;font-weight:400;font-family:'Liberation Sans', sans-serif;">Recording Pen</div>
<div class="t" style="left:223px;width:300px;text-align:right;top:563.9px;font-size:19.8px;line-height:19.8px;color:#333;font-weight:400;font-family:'Liberation Mono', monospace;transform:scaleY(1.18);transform-origin:0 15.2px;letter-spacing:-0.1px">188.74k</div>
<div style="position:absolute;left:560px;top:560.4000000000001px;width:20px;height:20px;border-radius:50%;background:#e8875a"></div>
<div class="t" style="left:590px;top:561.3px;font-size:20.8px;line-height:20.8px;color:#383838;font-weight:400;font-family:'Liberation Sans', sans-serif;">Premium</div>
<div style="position:absolute;left:982px;top:555.9px;width:51px;height:29px;border-radius:15px;background:#9bd33f"></div>
<div class="t" style="left:608.0px;width:800px;text-align:center;top:560.8px;font-size:20.2px;line-height:20.2px;color:#1c2414;font-weight:400;font-family:'Liberation Sans', sans-serif;">Yes</div>
<div style="position:absolute;left:43px;top:598px;width:15px;height:15px;border:1.4px solid #555;box-sizing:border-box;"></div>
<div style="position:absolute;left:46.5px;top:604.5px;width:8px;height:1.6px;background:#555;"></div>
<div class="t" style="left:69.5px;top:598.0px;font-size:19.6px;line-height:19.6px;color:#1e1e1e;font-weight:700;font-family:'Liberation Sans', sans-serif;">Cameras and camcorders</div>
<div class="t" style="left:224px;width:300px;text-align:right;top:600.0px;font-size:19.3px;line-height:19.3px;color:#222;font-weight:700;font-family:'Liberation Mono', monospace;transform:scaleY(1.12);transform-origin:0 14.8px;letter-spacing:0.4px">4.46m</div>
<div class="t" style="left:78px;top:629.4px;font-size:20.7px;line-height:20.7px;color:#383838;font-weight:400;font-family:'Liberation Sans', sans-serif;">Camcorders</div>
<div class="t" style="left:223px;width:300px;text-align:right;top:631.9px;font-size:19.8px;line-height:19.8px;color:#333;font-weight:400;font-family:'Liberation Mono', monospace;transform:scaleY(1.18);transform-origin:0 15.2px;letter-spacing:-0.1px">2.05m</div>
<div style="position:absolute;left:560px;top:628.4000000000001px;width:20px;height:20px;border-radius:50%;background:#e8875a"></div>
<div class="t" style="left:589.6px;top:629.3px;font-size:20.8px;line-height:20.8px;color:#383838;font-weight:400;font-family:'Liberation Sans', sans-serif;">Premi...</div>
<div style="position:absolute;left:673px;top:628.4000000000001px;width:20px;height:20px;border-radius:50%;background:#f4c1aa"></div>
<div class="t" style="left:704px;top:629.3px;font-size:20.8px;line-height:20.8px;color:#383838;font-weight:400;font-family:'Liberation Sans', sans-serif;">Advan...</div>
<div style="position:absolute;left:793.7px;top:628.4000000000001px;width:20px;height:20px;border-radius:50%;background:#efdf96"></div>
<div class="t" style="left:824px;top:629.3px;font-size:20.8px;line-height:20.8px;color:#383838;font-weight:400;font-family:'Liberation Sans', sans-serif;">Reg...</div>
<div style="position:absolute;left:984px;top:623.9px;width:48px;height:29px;border-radius:15px;background:#ea6464"></div>
<div class="t" style="left:608.5px;width:800px;text-align:center;top:628.8px;font-size:20.2px;line-height:20.2px;color:#1c2414;font-weight:400;font-family:'Liberation Sans', sans-serif;">No</div>
<div class="t" style="left:78px;top:661.3px;font-size:20.7px;line-height:20.7px;color:#383838;font-weight:400;font-family:'Liberation Sans', sans-serif;">Cameras &amp; Camcorders Acces...</div>
<div class="t" style="left:223px;width:300px;text-align:right;top:663.8px;font-size:19.8px;line-height:19.8px;color:#333;font-weight:400;font-family:'Liberation Mono', monospace;transform:scaleY(1.18);transform-origin:0 15.2px;letter-spacing:-0.1px">161.06k</div>
<div style="position:absolute;left:560px;top:660.3000000000001px;width:20px;height:20px;border-radius:50%;background:#e8875a"></div>
<div class="t" style="left:589.6px;top:661.2px;font-size:20.8px;line-height:20.8px;color:#383838;font-weight:400;font-family:'Liberation Sans', sans-serif;">Premi...</div>
<div style="position:absolute;left:673px;top:660.3000000000001px;width:20px;height:20px;border-radius:50%;background:#f4c1aa"></div>
<div class="t" style="left:704px;top:661.2px;font-size:20.8px;line-height:20.8px;color:#383838;font-weight:400;font-family:'Liberation Sans', sans-serif;">Advan...</div>
<div style="position:absolute;left:793.7px;top:660.3000000000001px;width:20px;height:20px;border-radius:50%;background:#efdf96"></div>
<div class="t" style="left:824px;top:661.2px;font-size:20.8px;line-height:20.8px;color:#383838;font-weight:400;font-family:'Liberation Sans', sans-serif;">Reg...</div>
<div style="position:absolute;left:984px;top:655.8px;width:48px;height:29px;border-radius:15px;background:#ea6464"></div>
<div class="t" style="left:608.5px;width:800px;text-align:center;top:660.7px;font-size:20.2px;line-height:20.2px;color:#1c2414;font-weight:400;font-family:'Liberation Sans', sans-serif;">No</div>
<div class="t" style="left:78px;top:694.0px;font-size:20.7px;line-height:20.7px;color:#383838;font-weight:400;font-family:'Liberation Sans', sans-serif;">Digital Cameras</div>
<div class="t" style="left:223px;width:300px;text-align:right;top:696.5px;font-size:19.8px;line-height:19.8px;color:#333;font-weight:400;font-family:'Liberation Mono', monospace;transform:scaleY(1.18);transform-origin:0 15.2px;letter-spacing:-0.1px">1.08m</div>
<div style="position:absolute;left:560px;top:693.0px;width:20px;height:20px;border-radius:50%;background:#e8875a"></div>
<div class="t" style="left:589.6px;top:693.9px;font-size:20.8px;line-height:20.8px;color:#383838;font-weight:400;font-family:'Liberation Sans', sans-serif;">Premi...</div>
<div style="position:absolute;left:673px;top:693.0px;width:20px;height:20px;border-radius:50%;background:#f4c1aa"></div>
<div class="t" style="left:704px;top:693.9px;font-size:20.8px;line-height:20.8px;color:#383838;font-weight:400;font-family:'Liberation Sans', sans-serif;">Advan...</div>
<div style="position:absolute;left:793.7px;top:693.0px;width:20px;height:20px;border-radius:50%;background:#efdf96"></div>
<div class="t" style="left:824px;top:693.9px;font-size:20.8px;line-height:20.8px;color:#383838;font-weight:400;font-family:'Liberation Sans', sans-serif;">Reg...</div>
<div style="position:absolute;left:984px;top:688.5px;width:48px;height:29px;border-radius:15px;background:#ea6464"></div>
<div class="t" style="left:608.5px;width:800px;text-align:center;top:693.4px;font-size:20.2px;line-height:20.2px;color:#1c2414;font-weight:400;font-family:'Liberation Sans', sans-serif;">No</div>
<div class="t" style="left:78px;top:726.6px;font-size:20.7px;line-height:20.7px;color:#383838;font-weight:400;font-family:'Liberation Sans', sans-serif;">Digital SLR Cameras</div>
<div class="t" style="left:223px;width:300px;text-align:right;top:729.1px;font-size:19.8px;line-height:19.8px;color:#333;font-weight:400;font-family:'Liberation Mono', monospace;transform:scaleY(1.18);transform-origin:0 15.2px;letter-spacing:-0.1px">1.17m</div>
<div style="position:absolute;left:560px;top:725.6px;width:20px;height:20px;border-radius:50%;background:#e8875a"></div>
<div class="t" style="left:589.6px;top:726.5px;font-size:20.8px;line-height:20.8px;color:#383838;font-weight:400;font-family:'Liberation Sans', sans-serif;">Premi...</div>
<div style="position:absolute;left:673px;top:725.6px;width:20px;height:20px;border-radius:50%;background:#f4c1aa"></div>
<div class="t" style="left:704px;top:726.5px;font-size:20.8px;line-height:20.8px;color:#383838;font-weight:400;font-family:'Liberation Sans', sans-serif;">Advan...</div>
<div style="position:absolute;left:793.7px;top:725.6px;width:20px;height:20px;border-radius:50%;background:#efdf96"></div>
<div class="t" style="left:824px;top:726.5px;font-size:20.8px;line-height:20.8px;color:#383838;font-weight:400;font-family:'Liberation Sans', sans-serif;">Reg...</div>
<div style="position:absolute;left:984px;top:721.1px;width:48px;height:29px;border-radius:15px;background:#ea6464"></div>
<div class="t" style="left:608.5px;width:800px;text-align:center;top:726.0px;font-size:20.2px;line-height:20.2px;color:#1c2414;font-weight:400;font-family:'Liberation Sans', sans-serif;">No</div>
<div style="position:absolute;left:43px;top:763px;width:15px;height:15px;border:1.4px solid #555;box-sizing:border-box;"></div>
<div style="position:absolute;left:46.5px;top:769.5px;width:8px;height:1.6px;background:#555;"></div>
<div class="t" style="left:69.5px;top:763.2px;font-size:19.6px;line-height:19.6px;color:#1e1e1e;font-weight:700;font-family:'Liberation Sans', sans-serif;">Cell phones</div>
<div class="t" style="left:224px;width:300px;text-align:right;top:765.2px;font-size:19.3px;line-height:19.3px;color:#222;font-weight:700;font-family:'Liberation Mono', monospace;transform:scaleY(1.12);transform-origin:0 14.8px;letter-spacing:0.4px">1.36m</div>
<div class="t" style="left:78px;top:793.9px;font-size:20.7px;line-height:20.7px;color:#383838;font-weight:400;font-family:'Liberation Sans', sans-serif;">Cell phones Accessories</div>
<div class="t" style="left:223px;width:300px;text-align:right;top:796.4px;font-size:19.8px;line-height:19.8px;color:#333;font-weight:400;font-family:'Liberation Mono', monospace;transform:scaleY(1.18);transform-origin:0 15.2px;letter-spacing:-0.1px">18.70k</div>
<div style="position:absolute;left:560px;top:792.9000000000001px;width:20px;height:20px;border-radius:50%;background:#e8875a"></div>
<div class="t" style="left:589.6px;top:793.8px;font-size:20.8px;line-height:20.8px;color:#383838;font-weight:400;font-family:'Liberation Sans', sans-serif;">Premium</div>
<div style="position:absolute;left:684px;top:792.9000000000001px;width:20px;height:20px;border-radius:50%;background:#efdf96"></div>
<div class="t" style="left:715px;top:793.8px;font-size:20.8px;line-height:20.8px;color:#383838;font-weight:400;font-family:'Liberation Sans', sans-serif;">Regular</div>
<div style="position:absolute;left:982px;top:788.4px;width:51px;height:29px;border-radius:15px;background:#9bd33f"></div>
<div class="t" style="left:608.0px;width:800px;text-align:center;top:793.3px;font-size:20.2px;line-height:20.2px;color:#1c2414;font-weight:400;font-family:'Liberation Sans', sans-serif;">Yes</div>
<div class="t" style="left:78px;top:826.6px;font-size:20.7px;line-height:20.7px;color:#383838;font-weight:400;font-family:'Liberation Sans', sans-serif;">Home &amp; Office Phones</div>
<div class="t" style="left:223px;width:300px;text-align:right;top:829.1px;font-size:19.8px;line-height:19.8px;color:#333;font-weight:400;font-family:'Liberation Mono', monospace;transform:scaleY(1.18);transform-origin:0 15.2px;letter-spacing:-0.1px">76.17k</div>
<div style="position:absolute;left:560px;top:825.6px;width:20px;height:20px;border-radius:50%;background:#e8875a"></div>
<div class="t" style="left:589.6px;top:826.5px;font-size:20.8px;line-height:20.8px;color:#383838;font-weight:400;font-family:'Liberation Sans', sans-serif;">Premium</div>
<div style="position:absolute;left:684px;top:825.6px;width:20px;height:20px;border-radius:50%;background:#efdf96"></div>
<div class="t" style="left:715px;top:826.5px;font-size:20.8px;line-height:20.8px;color:#383838;font-weight:400;font-family:'Liberation Sans', sans-serif;">Regular</div>
<div style="position:absolute;left:982px;top:821.1px;width:51px;height:29px;border-radius:15px;background:#9bd33f"></div>
<div class="t" style="left:608.0px;width:800px;text-align:center;top:826.0px;font-size:20.2px;line-height:20.2px;color:#1c2414;font-weight:400;font-family:'Liberation Sans', sans-serif;">Yes</div>
<div class="t" style="left:78px;top:859.3px;font-size:20.7px;line-height:20.7px;color:#383838;font-weight:400;font-family:'Liberation Sans', sans-serif;">Smart phones &amp; PDAs</div>
<div class="t" style="left:223px;width:300px;text-align:right;top:861.8px;font-size:19.8px;line-height:19.8px;color:#333;font-weight:400;font-family:'Liberation Mono', monospace;transform:scaleY(1.18);transform-origin:0 15.2px;letter-spacing:-0.1px">484.41k</div>
<div style="position:absolute;left:560px;top:858.3000000000001px;width:20px;height:20px;border-radius:50%;background:#e8875a"></div>
<div class="t" style="left:589.6px;top:859.2px;font-size:20.8px;line-height:20.8px;color:#383838;font-weight:400;font-family:'Liberation Sans', sans-serif;">Premium</div>
<div style="position:absolute;left:684px;top:858.3000000000001px;width:20px;height:20px;border-radius:50%;background:#efdf96"></div>
<div class="t" style="left:715px;top:859.2px;font-size:20.8px;line-height:20.8px;color:#383838;font-weight:400;font-family:'Liberation Sans', sans-serif;">Regular</div>
<div style="position:absolute;left:982px;top:853.8px;width:51px;height:29px;border-radius:15px;background:#9bd33f"></div>
<div class="t" style="left:608.0px;width:800px;text-align:center;top:858.7px;font-size:20.2px;line-height:20.2px;color:#1c2414;font-weight:400;font-family:'Liberation Sans', sans-serif;">Yes</div>
<svg style="position:absolute;left:1250px;top:864.8000000000001px" width="14" height="8" viewBox="0 0 14 8"><polygon points="0,0 14,0 7,8" fill="#1a1a1a"/></svg>
<div class="t" style="left:78px;top:892.6px;font-size:20.7px;line-height:20.7px;color:#383838;font-weight:400;font-family:'Liberation Sans', sans-serif;">Touch Screen Phones</div>
<div class="t" style="left:223px;width:300px;text-align:right;top:895.1px;font-size:19.8px;line-height:19.8px;color:#333;font-weight:400;font-family:'Liberation Mono', monospace;transform:scaleY(1.18);transform-origin:0 15.2px;letter-spacing:-0.1px">518.09k</div>
<div style="position:absolute;left:560px;top:891.6px;width:20px;height:20px;border-radius:50%;background:#e8875a"></div>
<div class="t" style="left:589.6px;top:892.5px;font-size:20.8px;line-height:20.8px;color:#383838;font-weight:400;font-family:'Liberation Sans', sans-serif;">Premium</div>
<div style="position:absolute;left:684px;top:891.6px;width:20px;height:20px;border-radius:50%;background:#efdf96"></div>
<div class="t" style="left:715px;top:892.5px;font-size:20.8px;line-height:20.8px;color:#383838;font-weight:400;font-family:'Liberation Sans', sans-serif;">Regular</div>
<div style="position:absolute;left:982px;top:887.1px;width:51px;height:29px;border-radius:15px;background:#9bd33f"></div>
<div class="t" style="left:608.0px;width:800px;text-align:center;top:892.0px;font-size:20.2px;line-height:20.2px;color:#1c2414;font-weight:400;font-family:'Liberation Sans', sans-serif;">Yes</div>
<svg style="position:absolute;left:1250px;top:898.1px" width="14" height="8" viewBox="0 0 14 8"><polygon points="0,0 14,0 7,8" fill="#1a1a1a"/></svg>
<div style="position:absolute;left:43px;top:928px;width:15px;height:15px;border:1.4px solid #555;box-sizing:border-box;"></div>
<div style="position:absolute;left:46.5px;top:934.5px;width:8px;height:1.6px;background:#555;"></div>
<div class="t" style="left:69.5px;top:928.9px;font-size:19.6px;line-height:19.6px;color:#1e1e1e;font-weight:700;font-family:'Liberation Sans', sans-serif;">Computers</div>
<div class="t" style="left:224px;width:300px;text-align:right;top:930.9px;font-size:19.3px;line-height:19.3px;color:#222;font-weight:700;font-family:'Liberation Mono', monospace;transform:scaleY(1.12);transform-origin:0 14.8px;letter-spacing:0.4px">15.49m</div>
<svg style="position:absolute;left:1250px;top:933.5px" width="14" height="8" viewBox="0 0 14 8"><polygon points="0,0 14,0 7,8" fill="#1a1a1a"/></svg>
<div class="t" style="left:78px;top:959.8px;font-size:20.7px;line-height:20.7px;color:#383838;font-weight:400;font-family:'Liberation Sans', sans-serif;">Computers Accessories</div>
<div class="t" style="left:223px;width:300px;text-align:right;top:962.3px;font-size:19.8px;line-height:19.8px;color:#333;font-weight:400;font-family:'Liberation Mono', monospace;transform:scaleY(1.18);transform-origin:0 15.2px;letter-spacing:-0.1px">700.04k</div>
<div style="position:absolute;left:560px;top:958.8000000000001px;width:20px;height:20px;border-radius:50%;background:#e8875a"></div>
<div class="t" style="left:589.6px;top:959.7px;font-size:20.8px;line-height:20.8px;color:#383838;font-weight:400;font-family:'Liberation Sans', sans-serif;">Premium</div>
<div style="position:absolute;left:684.5px;top:958.8000000000001px;width:20px;height:20px;border-radius:50%;background:#f4c1aa"></div>
<div class="t" style="left:715.4px;top:959.7px;font-size:20.8px;line-height:20.8px;color:#383838;font-weight:400;font-family:'Liberation Sans', sans-serif;">Advanced</div>
<div style="position:absolute;left:982px;top:954.3px;width:51px;height:29px;border-radius:15px;background:#9bd33f"></div>
<div class="t" style="left:608.0px;width:800px;text-align:center;top:959.2px;font-size:20.2px;line-height:20.2px;color:#1c2414;font-weight:400;font-family:'Liberation Sans', sans-serif;">Yes</div>
<svg style="position:absolute;left:1250px;top:965.3000000000001px" width="14" height="8" viewBox="0 0 14 8"><polygon points="0,0 14,0 7,8" fill="#1a1a1a"/></svg>
<div class="t" style="left:78px;top:992.1px;font-size:20.7px;line-height:20.7px;color:#383838;font-weight:400;font-family:'Liberation Sans', sans-serif;">Desktops</div>
<div class="t" style="left:223px;width:300px;text-align:right;top:994.6px;font-size:19.8px;line-height:19.8px;color:#333;font-weight:400;font-family:'Liberation Mono', monospace;transform:scaleY(1.18);transform-origin:0 15.2px;letter-spacing:-0.1px">1.05m</div>
<div style="position:absolute;left:560px;top:991.1px;width:20px;height:20px;border-radius:50%;background:#e8875a"></div>
<div class="t" style="left:589.6px;top:992.0px;font-size:20.8px;line-height:20.8px;color:#383838;font-weight:400;font-family:'Liberation Sans', sans-serif;">Premium</div>
<div style="position:absolute;left:684.5px;top:991.1px;width:20px;height:20px;border-radius:50%;background:#f4c1aa"></div>
<div class="t" style="left:715.4px;top:992.0px;font-size:20.8px;line-height:20.8px;color:#383838;font-weight:400;font-family:'Liberation Sans', sans-serif;">Advanced</div>
<div style="position:absolute;left:982px;top:986.6px;width:51px;height:29px;border-radius:15px;background:#9bd33f"></div>
<div class="t" style="left:608.0px;width:800px;text-align:center;top:991.5px;font-size:20.2px;line-height:20.2px;color:#1c2414;font-weight:400;font-family:'Liberation Sans', sans-serif;">Yes</div>
<svg style="position:absolute;left:1250px;top:997.6px" width="14" height="8" viewBox="0 0 14 8"><polygon points="0,0 14,0 7,8" fill="#1a1a1a"/></svg>
<div class="t" style="left:78px;top:1024.8px;font-size:20.7px;line-height:20.7px;color:#383838;font-weight:400;font-family:'Liberation Sans', sans-serif;">Laptops</div>
<div class="t" style="left:223px;width:300px;text-align:right;top:1027.3px;font-size:19.8px;line-height:19.8px;color:#333;font-weight:400;font-family:'Liberation Mono', monospace;transform:scaleY(1.18);transform-origin:0 15.2px;letter-spacing:-0.1px">3.77m</div>
<div style="position:absolute;left:560px;top:1023.8px;width:20px;height:20px;border-radius:50%;background:#e8875a"></div>
<div class="t" style="left:589.6px;top:1024.7px;font-size:20.8px;line-height:20.8px;color:#383838;font-weight:400;font-family:'Liberation Sans', sans-serif;">Premium</div>
<div style="position:absolute;left:684.5px;top:1023.8px;width:20px;height:20px;border-radius:50%;background:#f4c1aa"></div>
<div class="t" style="left:715.4px;top:1024.7px;font-size:20.8px;line-height:20.8px;color:#383838;font-weight:400;font-family:'Liberation Sans', sans-serif;">Advanced</div>
<div style="position:absolute;left:982px;top:1019.3px;width:51px;height:29px;border-radius:15px;background:#9bd33f"></div>
<div class="t" style="left:608.0px;width:800px;text-align:center;top:1024.2px;font-size:20.2px;line-height:20.2px;color:#1c2414;font-weight:400;font-family:'Liberation Sans', sans-serif;">Yes</div>
<svg style="position:absolute;left:1250px;top:1030.3px" width="14" height="8" viewBox="0 0 14 8"><polygon points="0,0 14,0 7,8" fill="#1a1a1a"/></svg>
<div class="t" style="left:78px;top:1057.4px;font-size:20.7px;line-height:20.7px;color:#383838;font-weight:400;font-family:'Liberation Sans', sans-serif;">Monitors</div>
<div class="t" style="left:223px;width:300px;text-align:right;top:1059.9px;font-size:19.8px;line-height:19.8px;color:#333;font-weight:400;font-family:'Liberation Mono', monospace;transform:scaleY(1.18);transform-origin:0 15.2px;letter-spacing:-0.1px">2.16m</div>
<div style="position:absolute;left:560px;top:1056.4px;width:20px;height:20px;border-radius:50%;background:#e8875a"></div>
<div class="t" style="left:589.6px;top:1057.3px;font-size:20.8px;line-height:20.8px;color:#383838;font-weight:400;font-family:'Liberation Sans', sans-serif;">Premium</div>
<div style="position:absolute;left:684.5px;top:1056.4px;width:20px;height:20px;border-radius:50%;background:#f4c1aa"></div>
<div class="t" style="left:715.4px;top:1057.3px;font-size:20.8px;line-height:20.8px;color:#383838;font-weight:400;font-family:'Liberation Sans', sans-serif;">Advanced</div>
<div style="position:absolute;left:982px;top:1051.9px;width:51px;height:29px;border-radius:15px;background:#9bd33f"></div>
<div class="t" style="left:608.0px;width:800px;text-align:center;top:1056.8px;font-size:20.2px;line-height:20.2px;color:#1c2414;font-weight:400;font-family:'Liberation Sans', sans-serif;">Yes</div>
<svg style="position:absolute;left:1250px;top:1062.9px" width="14" height="8" viewBox="0 0 14 8"><polygon points="0,0 14,0 7,8" fill="#1a1a1a"/></svg>
<div class="t" style="left:78px;top:1090.8px;font-size:20.7px;line-height:20.7px;color:#383838;font-weight:400;font-family:'Liberation Sans', sans-serif;">Printers, Scanners &amp; Fax</div>
<div class="t" style="left:223px;width:300px;text-align:right;top:1093.3px;font-size:19.8px;line-height:19.8px;color:#333;font-weight:400;font-family:'Liberation Mono', monospace;transform:scaleY(1.18);transform-origin:0 15.2px;letter-spacing:-0.1px">1.22m</div>
<div style="position:absolute;left:560px;top:1089.8px;width:20px;height:20px;border-radius:50%;background:#e8875a"></div>
<div class="t" style="left:589.6px;top:1090.7px;font-size:20.8px;line-height:20.8px;color:#383838;font-weight:400;font-family:'Liberation Sans', sans-serif;">Premium</div>
<div style="position:absolute;left:684.5px;top:1089.8px;width:20px;height:20px;border-radius:50%;background:#f4c1aa"></div>
<div class="t" style="left:715.4px;top:1090.7px;font-size:20.8px;line-height:20.8px;color:#383838;font-weight:400;font-family:'Liberation Sans', sans-serif;">Advanced</div>
<div style="position:absolute;left:982px;top:1085.3px;width:51px;height:29px;border-radius:15px;background:#9bd33f"></div>
<div class="t" style="left:608.0px;width:800px;text-align:center;top:1090.2px;font-size:20.2px;line-height:20.2px;color:#1c2414;font-weight:400;font-family:'Liberation Sans', sans-serif;">Yes</div>
<svg style="position:absolute;left:1250px;top:1096.3px" width="14" height="8" viewBox="0 0 14 8"><polygon points="0,0 14,0 7,8" fill="#1a1a1a"/></svg>
<div class="t" style="left:78px;top:1123.4px;font-size:20.7px;line-height:20.7px;color:#383838;font-weight:400;font-family:'Liberation Sans', sans-serif;">Projectors &amp; Screens</div>
<div class="t" style="left:223px;width:300px;text-align:right;top:1125.9px;font-size:19.8px;line-height:19.8px;color:#333;font-weight:400;font-family:'Liberation Mono', monospace;transform:scaleY(1.18);transform-origin:0 15.2px;letter-spacing:-0.1px">5.95m</div>
<div style="position:absolute;left:560px;top:1122.4px;width:20px;height:20px;border-radius:50%;background:#e8875a"></div>
<div class="t" style="left:589.6px;top:1123.3px;font-size:20.8px;line-height:20.8px;color:#383838;font-weight:400;font-family:'Liberation Sans', sans-serif;">Premium</div>
<div style="position:absolute;left:684.5px;top:1122.4px;width:20px;height:20px;border-radius:50%;background:#f4c1aa"></div>
<div class="t" style="left:715.4px;top:1123.3px;font-size:20.8px;line-height:20.8px;color:#383838;font-weight:400;font-family:'Liberation Sans', sans-serif;">Advanced</div>
<div style="position:absolute;left:984px;top:1117.9px;width:48px;height:29px;border-radius:15px;background:#ea6464"></div>
<div class="t" style="left:608.5px;width:800px;text-align:center;top:1122.8px;font-size:20.2px;line-height:20.2px;color:#1c2414;font-weight:400;font-family:'Liberation Sans', sans-serif;">No</div>
<svg style="position:absolute;left:1250px;top:1128.9px" width="14" height="8" viewBox="0 0 14 8"><polygon points="0,0 14,0 7,8" fill="#1a1a1a"/></svg>
<div style="position:absolute;left:1097px;top:523px;width:181px;height:32px;background:#e8f2fc;border:1.6px solid #2d72c4;box-sizing:border-box;"></div>
<div style="position:absolute;left:1246px;top:527px;width:22px;height:21px;background:#cfcfcf;"></div>
<svg style="position:absolute;left:1250px;top:534.5px" width="14" height="8" viewBox="0 0 14 8"><polygon points="0,0 14,0 7,8" fill="#1a1a1a"/></svg>
<div class="t" style="left:320.5px;width:800px;text-align:center;top:1160.7px;font-size:30.8px;line-height:30.8px;color:#e00000;font-weight:400;font-family:'Liberation Sans', sans-serif;">Plain-text</div>
<div class="t" style="left:601px;width:800px;text-align:center;top:1160.7px;font-size:30.8px;line-height:30.8px;color:#e00000;font-weight:400;font-family:'Liberation Sans', sans-serif;">Chip</div>
<div class="t" style="left:791.5px;width:800px;text-align:center;top:1160.7px;font-size:30.8px;line-height:30.8px;color:#e00000;font-weight:400;font-family:'Liberation Sans', sans-serif;">Arrow</div>
<svg style="position:absolute;left:8px;top:533px" width="18" height="17" viewBox="0 0 18 17"><path d="M0,2 H16.5 M0,6.6 H16.5 M0,11.2 H16.5 M0,15.7 H16.5" stroke="#666" stroke-width="1.5"/></svg>
<div style="position:absolute;left:0px;top:634px;width:2px;height:25px;background:#888;"></div>
<div style="position:absolute;left:1102px;top:554px;width:321px;height:314px;background:#fff;box-shadow:0 2px 6px rgba(0,0,0,0.22);"></div>
<div class="t" style="left:1121.5px;top:585.3px;font-size:22.6px;line-height:22.6px;color:#9c9c9c;font-weight:400;font-family:'Liberation Sans', sans-serif;">Search for an option</div>
<div style="position:absolute;left:1102px;top:633.5px;width:321px;height:1.5px;background:#e6e6e6;"></div>
<div class="t" style="left:1121px;top:652.4px;font-size:21.2px;line-height:21.2px;color:#3a3a3a;font-weight:400;font-family:'Liberation Sans', sans-serif;">Select an option or create one</div>
<div style="position:absolute;left:1102px;top:690px;width:321px;height:58px;background:#f4f4f4;"></div>
<div style="position:absolute;left:1125.2px;top:711.7px;width:20px;height:20px;border-radius:50%;background:#93d03f"></div>
<div class="t" style="left:1155.7px;top:708.2px;font-size:21.8px;line-height:21.8px;color:#333;font-weight:400;font-family:'Liberation Sans', sans-serif;">Option 1</div>
<div style="position:absolute;left:1125.2px;top:769.9000000000001px;width:20px;height:20px;border-radius:50%;background:#ff8c00"></div>
<div class="t" style="left:1155.7px;top:766.4px;font-size:21.8px;line-height:21.8px;color:#333;font-weight:400;font-family:'Liberation Sans', sans-serif;">Option 2</div>
<div style="position:absolute;left:1125.2px;top:828.1px;width:20px;height:20px;border-radius:50%;background:#f20a0a"></div>
<div class="t" style="left:1155.7px;top:824.6px;font-size:21.8px;line-height:21.8px;color:#333;font-weight:400;font-family:'Liberation Sans', sans-serif;">Option 3</div>
<div style="position:absolute;left:4px;top:1243px;width:2287px;height:1.5px;background:#d9d9d9;"></div>
<div class="t" style="left:4.6px;top:1256.9px;font-size:21.3px;line-height:21.3px;color:#333;font-weight:400;font-family:'Liberation Sans', sans-serif;">Total rows: 22</div>
<svg style="position:absolute;left:0px;top:1281px" width="13" height="13" viewBox="0 0 13 13"><path d="M1,0 V12 H13" fill="none" stroke="#999" stroke-width="1.5"/></svg>
<svg style="position:absolute;left:1694px;top:1254px" width="30" height="30" viewBox="0 0 30 30"><circle cx="15" cy="15" r="10" fill="none" stroke="#444" stroke-width="1.6"/><rect x="0" y="0" width="0" height="0"/><path d="M13,1.5 H17 L17.6,5 L12.4,5 Z" fill="#fff" stroke="#444" stroke-width="1.6" stroke-linejoin="round" transform="rotate(0 15 15)"/><path d="M13,1.5 H17 L17.6,5 L12.4,5 Z" fill="#fff" stroke="#444" stroke-width="1.6" stroke-linejoin="round" transform="rotate(45 15 15)"/><path d="M13,1.5 H17 L17.6,5 L12.4,5 Z" fill="#fff" stroke="#444" stroke-width="1.6" stroke-linejoin="round" transform="rotate(90 15 15)"/><path d="M13,1.5 H17 L17.6,5 L12.4,5 Z" fill="#fff" stroke="#444" stroke-width="1.6" stroke-linejoin="round" transform="rotate(135 15 15)"/><path d="M13,1.5 H17 L17.6,5 L12.4,5 Z" fill="#fff" stroke="#444" stroke-width="1.6" stroke-linejoin="round" transform="rotate(180 15 15)"/><path d="M13,1.5 H17 L17.6,5 L12.4,5 Z" fill="#fff" stroke="#444" stroke-width="1.6" stroke-linejoin="round" transform="rotate(225 15 15)"/><path d="M13,1.5 H17 L17.6,5 L12.4,5 Z" fill="#fff" stroke="#444" stroke-width="1.6" stroke-linejoin="round" transform="rotate(270 15 15)"/><path d="M13,1.5 H17 L17.6,5 L12.4,5 Z" fill="#fff" stroke="#444" stroke-width="1.6" stroke-linejoin="round" transform="rotate(315 15 15)"/><circle cx="15" cy="15" r="9.2" fill="#fff"/><circle cx="15" cy="15" r="9.8" fill="none" stroke="#444" stroke-width="0"/><circle cx="15" cy="15" r="5.5" fill="none" stroke="#2d6cc3" stroke-width="1.8"/></svg>
<div style="position:absolute;left:1744px;top:1268px;width:18px;height:2px;background:#333;"></div>
<div style="position:absolute;left:1778px;top:1254px;width:99px;height:36px;border:1.5px solid #c8c8c8;box-sizing:border-box;background:#fff;"></div>
<div class="t" style="left:1531px;width:300px;text-align:right;top:1263.4px;font-size:19.5px;line-height:19.5px;color:#333;font-weight:400;font-family:'Liberation Mono', monospace;transform:scaleY(1.15);transform-origin:0 15.0px;letter-spacing:-0.1px">100</div>
<div class="t" style="left:1834px;top:1260.6px;font-size:21px;line-height:21px;color:#333;font-weight:400;font-family:'Liberation Sans', sans-serif;">%</div>
<div style="position:absolute;left:1887px;top:1268px;width:20px;height:2px;background:#333;"></div>
<div style="position:absolute;left:1896px;top:1259px;width:2px;height:20px;background:#333;"></div>
<div class="t" style="left:1957.6px;top:1257.6px;font-size:20.6px;line-height:20.6px;color:#333;font-weight:400;font-family:'Liberation Sans', sans-serif;">22 records</div>
<svg style="position:absolute;left:2077px;top:1258px" width="20" height="19" viewBox="0 0 20 19"><path d="M2,0 V19" stroke="#9a9a9a" stroke-width="2.4"/><polyline points="18,1 9,9.5 18,18" fill="none" stroke="#9a9a9a" stroke-width="2.2"/></svg>
<svg style="position:absolute;left:2106px;top:1258px" width="13" height="19" viewBox="0 0 13 19"><polyline points="12,1 3,9.5 12,18" fill="none" stroke="#9a9a9a" stroke-width="2.2"/></svg>
<div class="t" style="left:2130px;top:1257.6px;font-size:20.5px;line-height:20.5px;color:#333;font-weight:400;font-family:'Liberation Sans', sans-serif;">Page 1 of 1</div>
<svg style="position:absolute;left:2246px;top:1258px" width="13" height="19" viewBox="0 0 13 19"><polyline points="1,1 10,9.5 1,18" fill="none" stroke="#9a9a9a" stroke-width="2.2"/></svg>
<svg style="position:absolute;left:2269px;top:1258px" width="20" height="19" viewBox="0 0 20 19"><polyline points="1,1 10,9.5 1,18" fill="none" stroke="#9a9a9a" stroke-width="2.2"/><path d="M17.5,0 V19" stroke="#9a9a9a" stroke-width="2.4"/></svg>
<div style="position:absolute;left:2295px;top:1281px;width:6px;height:13px;background:#999;"></div>
<div style="position:absolute;left:1136px;top:1292.5px;width:24px;height:1.5px;background:#8f8f8f;"></div>
</body></html>
